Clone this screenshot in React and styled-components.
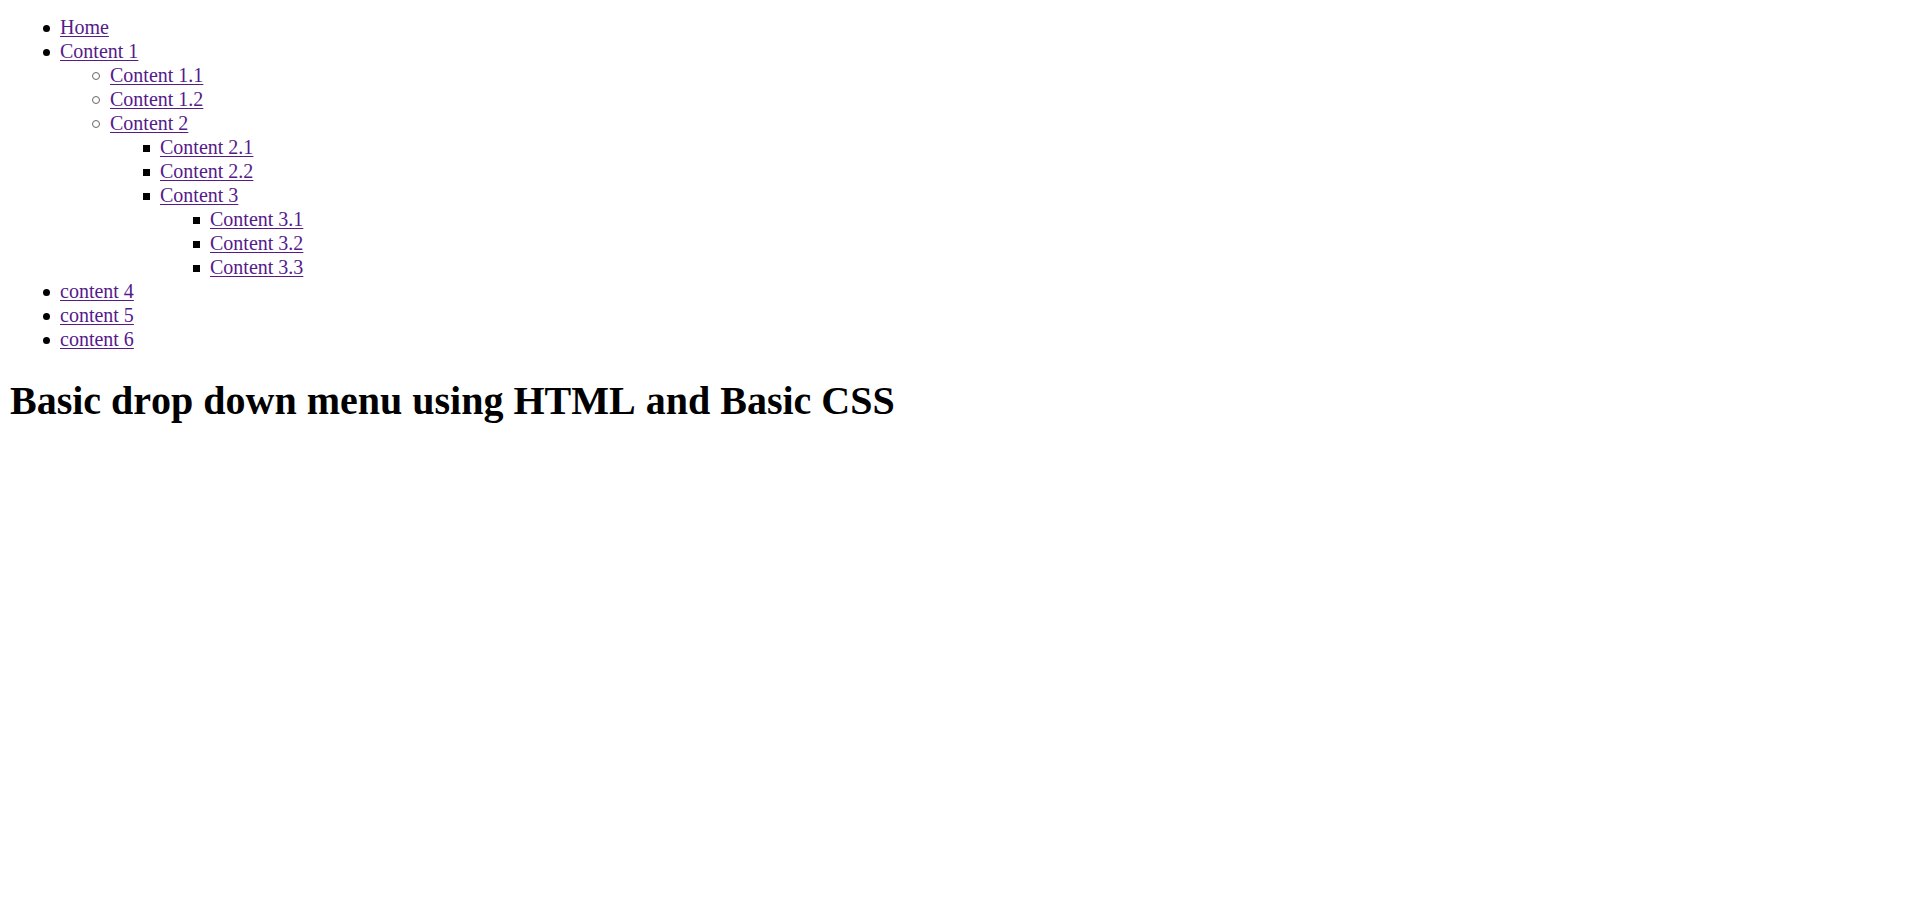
import React from "react";
import styled, { createGlobalStyle, css } from "styled-components";

const GlobalStyle = createGlobalStyle`
  body {
    margin: 0;
    background: #fff;
    color: #000;
    font-family: "Liberation Serif", "Times New Roman", serif;
    font-size: 20px;
    line-height: 24px;
  }
`;

const Page = styled.main`
  padding: 15px 10px;
`;

const MenuList = styled.ul`
  margin: 0;
  padding-left: 50px;
  list-style: none;
`;

const MARKERS = {
  disc: css`
    background: #000;
    border-radius: 50%;
  `,
  circle: css`
    border: 1px solid #666;
    border-radius: 50%;
  `,
  square: css`
    background: #000;
  `,
};

const MenuItem = styled.li`
  &::before {
    content: "";
    display: inline-block;
    box-sizing: border-box;
    width: ${({ $marker }) => ($marker === "circle" ? 8 : 7)}px;
    height: ${({ $marker }) => ($marker === "circle" ? 8 : 7)}px;
    margin-left: ${({ $marker }) => ($marker === "circle" ? -18 : -17)}px;
    margin-right: 10px;
    vertical-align: 2px;
    ${({ $marker }) => MARKERS[$marker]}
  }
`;

const MenuLink = styled.a`
  color: #551a8b;
  text-decoration: underline;
  text-decoration-thickness: 1px;
  text-decoration-skip-ink: none;
  text-underline-offset: 2px;
`;

const Title = styled.h1`
  margin: 26px 0;
  font-size: 40px;
  line-height: 48px;
  font-weight: bold;
  font-kerning: none;
`;

const MARKER_BY_DEPTH = ["disc", "circle", "square"];

const MENU = [
  { label: "Home" },
  {
    label: "Content 1",
    children: [
      { label: "Content 1.1" },
      { label: "Content 1.2" },
      {
        label: "Content 2",
        children: [
          { label: "Content 2.1" },
          { label: "Content 2.2" },
          {
            label: "Content 3",
            children: [
              { label: "Content 3.1" },
              { label: "Content 3.2" },
              { label: "Content 3.3" },
            ],
          },
        ],
      },
    ],
  },
  { label: "content 4" },
  { label: "content 5" },
  { label: "content 6" },
];

function Menu({ items, depth = 0 }) {
  const marker = MARKER_BY_DEPTH[Math.min(depth, 2)];
  return (
    <MenuList>
      {items.map(({ label, children }) => (
        <MenuItem key={label} $marker={marker}>
          <MenuLink href="#">{label}</MenuLink>
          {children && <Menu items={children} depth={depth + 1} />}
        </MenuItem>
      ))}
    </MenuList>
  );
}

export default function App() {
  return (
    <>
      <GlobalStyle />
      <Page>
        <nav>
          <Menu items={MENU} />
        </nav>
        <Title>Basic drop down menu using HTML and Basic CSS</Title>
      </Page>
    </>
  );
}
